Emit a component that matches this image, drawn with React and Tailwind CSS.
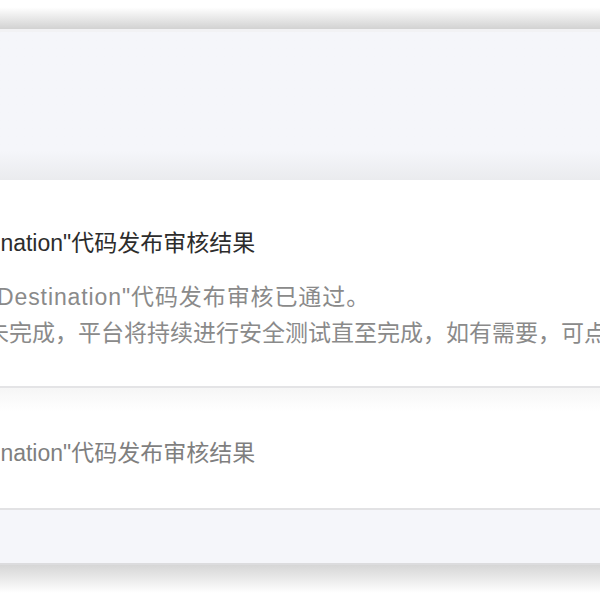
export default function App() {
  const font = { fontFamily: '"Liberation Sans", "Noto Sans CJK SC", sans-serif' };
  return (
    <div className="w-[600px] h-[600px] overflow-hidden bg-white flex flex-col" style={font}>
      <div className="h-[29px] shrink-0 bg-linear-to-b from-white from-25% to-[#d2d2d2]" />
      <div className="h-[3px] shrink-0 bg-[#f2f2f4]" />
      <div className="h-[148px] shrink-0 bg-linear-to-b from-[#f5f6fa] from-80% to-[#eaebee]" />

      <div className="h-[208px] shrink-0 bg-white border-b-2 border-[#e4e4e6] pt-[48px]">
        <div className="ml-[-52px] whitespace-nowrap text-[23px] leading-[30px] text-[#2c2c2c]">
          Destination"代码发布审核结果
        </div>
        <div className="mt-[21px] ml-[-3px] whitespace-nowrap text-[23px] leading-[36px] text-[#8a8a8a] tracking-[0.9px]">
          Destination"代码发布审核已通过。
        </div>
        <div className="ml-[-14px] whitespace-nowrap text-[23px] leading-[36px] text-[#8a8a8a]">
          未完成，平台将持续进行安全测试直至完成，如有需要，可点击查看详情。
        </div>
      </div>

      <div className="h-[122px] shrink-0 bg-linear-to-b from-[#f6f6f6] to-white to-20% border-b-2 border-[#e2e2e4] pt-[50px]">
        <div className="ml-[-52px] whitespace-nowrap text-[23px] leading-[30px] text-[#7f7f7f]">
          Destination"代码发布审核结果
        </div>
      </div>

      <div className="h-[55px] shrink-0 bg-[#f5f6fa] border-b-2 border-[#dcdcde]" />
      <div className="flex-1 bg-linear-to-b from-[#d6d6d6] to-white to-80%" />
    </div>
  );
}
